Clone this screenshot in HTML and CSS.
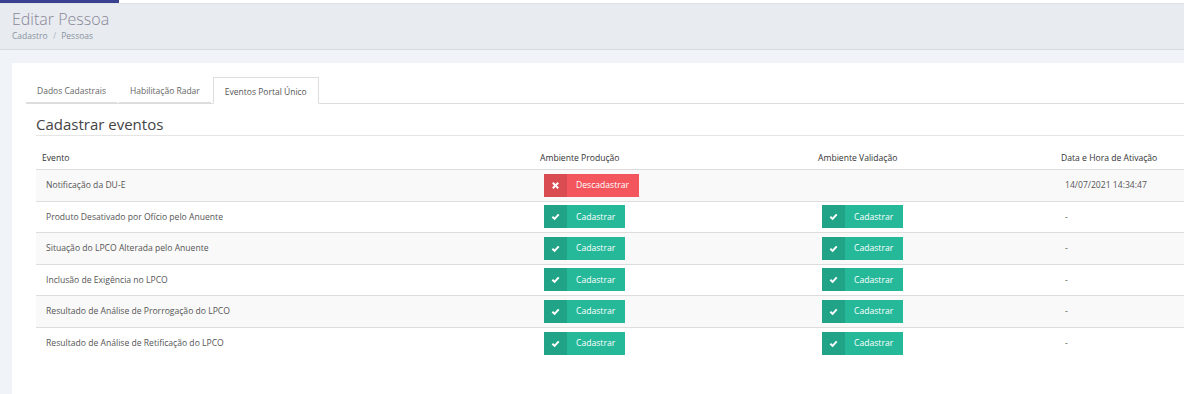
FILE: index.html
```html
<!DOCTYPE html>
<html lang="pt-BR">
<head>
  <meta charset="UTF-8">
  <title>Editar Pessoa</title>
  <link rel="stylesheet" href="styles.css">
</head>
<body>
  <div class="topbar"><span class="topbar-accent"></span></div>

  <div class="page-header">
    <h1>Editar Pessoa</h1>
    <div class="breadcrumb">Cadastro <span class="sep">/</span> Pessoas</div>
  </div>

  <div class="content">
    <div class="card">
      <ul class="tabs">
        <li>Dados Cadastrais</li>
        <li>Habilitação Radar</li>
        <li class="active">Eventos Portal Único</li>
      </ul>

      <div class="section">
        <h2>Cadastrar eventos</h2>

        <table class="events">
          <colgroup>
            <col class="c-evento">
            <col class="c-prod">
            <col class="c-valid">
            <col class="c-data">
          </colgroup>
          <thead>
            <tr>
              <th>Evento</th>
              <th>Ambiente Produção</th>
              <th>Ambiente Validação</th>
              <th>Data e Hora de Ativação</th>
            </tr>
          </thead>
          <tbody>
            <tr>
              <td>Notificação da DU-E</td>
              <td><button class="btn btn-red"><span class="ico"><svg viewBox="0 0 10 10"><path d="M2 2 8 8M8 2 2 8"/></svg></span>Descadastrar</button></td>
              <td></td>
              <td>14/07/2021 14:34:47</td>
            </tr>
            <tr>
              <td>Produto Desativado por Ofício pelo Anuente</td>
              <td><button class="btn btn-green"><span class="ico"><svg viewBox="0 0 10 10"><path d="M1.5 5.2 4 7.6 8.6 2.6"/></svg></span>Cadastrar</button></td>
              <td><button class="btn btn-green"><span class="ico"><svg viewBox="0 0 10 10"><path d="M1.5 5.2 4 7.6 8.6 2.6"/></svg></span>Cadastrar</button></td>
              <td>-</td>
            </tr>
            <tr>
              <td>Situação do LPCO Alterada pelo Anuente</td>
              <td><button class="btn btn-green"><span class="ico"><svg viewBox="0 0 10 10"><path d="M1.5 5.2 4 7.6 8.6 2.6"/></svg></span>Cadastrar</button></td>
              <td><button class="btn btn-green"><span class="ico"><svg viewBox="0 0 10 10"><path d="M1.5 5.2 4 7.6 8.6 2.6"/></svg></span>Cadastrar</button></td>
              <td>-</td>
            </tr>
            <tr>
              <td>Inclusão de Exigência no LPCO</td>
              <td><button class="btn btn-green"><span class="ico"><svg viewBox="0 0 10 10"><path d="M1.5 5.2 4 7.6 8.6 2.6"/></svg></span>Cadastrar</button></td>
              <td><button class="btn btn-green"><span class="ico"><svg viewBox="0 0 10 10"><path d="M1.5 5.2 4 7.6 8.6 2.6"/></svg></span>Cadastrar</button></td>
              <td>-</td>
            </tr>
            <tr>
              <td>Resultado de Análise de Prorrogação do LPCO</td>
              <td><button class="btn btn-green"><span class="ico"><svg viewBox="0 0 10 10"><path d="M1.5 5.2 4 7.6 8.6 2.6"/></svg></span>Cadastrar</button></td>
              <td><button class="btn btn-green"><span class="ico"><svg viewBox="0 0 10 10"><path d="M1.5 5.2 4 7.6 8.6 2.6"/></svg></span>Cadastrar</button></td>
              <td>-</td>
            </tr>
            <tr>
              <td>Resultado de Análise de Retificação do LPCO</td>
              <td><button class="btn btn-green"><span class="ico"><svg viewBox="0 0 10 10"><path d="M1.5 5.2 4 7.6 8.6 2.6"/></svg></span>Cadastrar</button></td>
              <td><button class="btn btn-green"><span class="ico"><svg viewBox="0 0 10 10"><path d="M1.5 5.2 4 7.6 8.6 2.6"/></svg></span>Cadastrar</button></td>
              <td>-</td>
            </tr>
          </tbody>
        </table>
      </div>
    </div>
  </div>
</body>
</html>
```

FILE: styles.css
```css
* { margin: 0; padding: 0; box-sizing: border-box; }
html, body {
  font-family: "Open Sans", "Liberation Sans", sans-serif;
  background: #f0f3f8;
  overflow: hidden;
  height: 100%;
  color: #555;
}

.topbar {
  height: 3px;
  background: #fff;
}
.topbar-accent {
  display: block;
  width: 119px;
  height: 3px;
  background: #3a4190;
}

.page-header {
  background: #e8ebf0;
  border-top: 1px solid #dfe2e7;
  border-bottom: 1px solid #d9dce1;
  height: 47px;
  padding: 3px 12px 0;
}
.page-header h1 {
  font-weight: 300;
  font-size: 16px;
  color: #8a8797;
  line-height: 24px;
}
.breadcrumb {
  font-size: 8.5px;
  line-height: 12px;
  color: #8a93a0;
  margin-top: -1px;
}
.breadcrumb .sep { color: #b0b6c0; margin: 0 3px; }

.content {
  padding: 13px 0 0 12px;
  margin-right: -40px;
  height: calc(100% - 50px);
}

.card {
  background: #fff;
  height: 100%;
  padding: 14px 0 0 14px;
}

.tabs {
  list-style: none;
  display: flex;
  border-bottom: 1px solid #ddd;
  font-size: 8.5px;
  color: #666;
}
.tabs li {
  height: 27px;
  line-height: 27px;
  padding: 0 11px;
  margin-right: 2px;
  border-bottom: 2px solid #ddd;
  margin-bottom: -1px;
}
.tabs li.active {
  border: 1px solid #ddd;
  border-bottom: 1px solid #fff;
  background: #fff;
  color: #555;
}

.section {
  padding: 10px 0 0 10px;
}
.section h2 {
  font-weight: 400;
  font-size: 15px;
  color: #444;
  line-height: 20px;
  padding-bottom: 1px;
  border-bottom: 1px solid #e5e5e5;
}

.events {
  width: 100%;
  border-collapse: collapse;
  margin-top: 11px;
  font-size: 8.6px;
}
.c-evento { width: 498px; }
.c-prod { width: 278px; }
.c-valid { width: 243px; }

.events th {
  text-align: left;
  font-weight: 400;
  color: #333;
  padding: 5px 6px 5px;
  border-bottom: 1px solid #ddd;
}
.events td {
  height: 31.5px;
  padding: 0 10px;
  border-bottom: 1px solid #ddd;
  color: #555;
}
.events tbody tr:nth-child(odd) td { background: #f9f9f9; }
.events tbody tr:last-child td { border-bottom: none; }

.btn {
  display: inline-flex;
  align-items: center;
  height: 23px;
  border: none;
  color: #fff;
  font-family: inherit;
  font-size: 8.6px;
  padding: 0 10px 0 0;
  cursor: pointer;
  vertical-align: middle;
}
.btn .ico {
  display: flex;
  align-items: center;
  justify-content: center;
  width: 23px;
  height: 23px;
  margin-right: 9px;
}
.btn .ico svg {
  width: 9px;
  height: 9px;
  fill: none;
  stroke: #fff;
  stroke-width: 2.2;
}
.btn-green { background: #25b99a; }
.btn-green .ico { background: #21a388; }
.btn-red { background: #f4565d; }
.btn-red .ico { background: #d94c52; }
```
